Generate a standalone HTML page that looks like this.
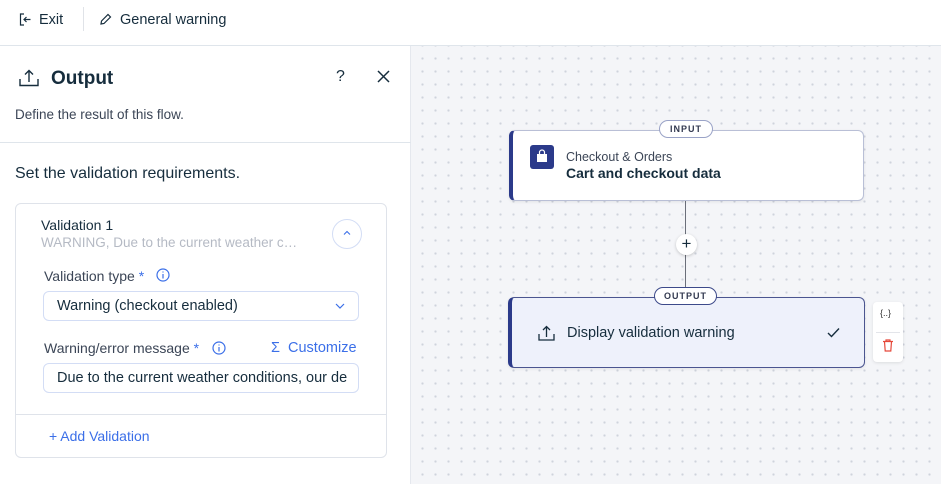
<!DOCTYPE html><html><head><style>
*{box-sizing:border-box;margin:0;padding:0}
body{width:941px;height:484px;overflow:hidden;font-family:"Liberation Sans",sans-serif;color:#162d3d;background:#fff;position:relative}
.abs{position:absolute}
.top{left:0;top:0;width:941px;height:46px;border-bottom:1px solid #dfe5eb;background:#fff}
.left{left:0;top:46px;width:411px;height:438px;background:#fff;border-right:1px solid #e5e8ee}
.canvas{left:411px;top:46px;width:530px;height:438px;background-color:#f4f5f8;background-image:radial-gradient(circle,#cfd3dc 1px,transparent 1.3px);background-size:13px 13px;background-position:5px 6px}
.t{position:absolute;white-space:nowrap}
.card{position:absolute;background:#fff;border:1px solid #b9bfd6;border-left:4px solid #2b3a8a;border-radius:6px;box-shadow:0 1px 3px rgba(0,0,0,.08)}
.badge{position:absolute;background:#fff;border:1px solid #9aa3c7;border-radius:10px;font-size:9px;letter-spacing:1px;font-weight:bold;color:#333a50;text-align:center;line-height:16px}
.field{position:absolute;border:1px solid #d3ddf5;border-radius:6px;background:#fff;font-size:14.5px;color:#162d3d;padding-left:13px;line-height:28px;overflow:hidden;white-space:nowrap}
.blue{color:#3b6fe8}
</style></head><body>
<div class="abs top">
 <svg class="abs" style="left:19px;top:13px" width="13" height="13" viewBox="0 0 13 13" fill="none" stroke="#162d3d" stroke-width="1.2"><path d="M5 1H1.5v11H5M11.5 6.5H5M7.5 4L5 6.5 7.5 9"/></svg>
 <div class="t" style="left:39px;top:12px;font-size:14.5px">Exit</div>
 <div class="abs" style="left:83px;top:7px;width:1px;height:24px;background:#e0e3e8"></div>
 <svg class="abs" style="left:99px;top:13px" width="13" height="13" viewBox="0 0 13 13" fill="none" stroke="#162d3d" stroke-width="1.2"><path d="M2 11l.5-3L9 1.5l2.5 2.5L5 10.5z"/></svg>
 <div class="t" style="left:120px;top:12px;font-size:14.5px">General warning</div>
</div>
<div class="abs left">
 <svg class="abs" style="left:19px;top:23px" width="20" height="18" viewBox="0 0 20 18" fill="none" stroke="#162d3d" stroke-width="1.4"><path d="M1 10v6.5h18V10M10 13V1.5M6 5.5l4-4 4 4"/></svg>
 <div class="t" style="left:51px;top:22px;font-size:19px;font-weight:bold">Output</div>
 <div class="t" style="left:336px;top:22px;font-size:16px">?</div>
 <svg class="abs" style="left:377px;top:24px" width="13" height="13" viewBox="0 0 13 13" stroke="#162d3d" stroke-width="1.5"><path d="M1 1l11 11M12 1L1 12"/></svg>
 <div class="t" style="left:15px;top:61px;font-size:13.5px;color:#3b4556">Define the result of this flow.</div>
 <div class="abs" style="left:0;top:96px;width:411px;height:1px;background:#dfe5eb"></div>
 <div class="t" style="left:15px;top:119px;font-size:16px;color:#162d3d">Set the validation requirements.</div>
 <div class="abs" style="left:15px;top:157px;width:372px;height:255px;border:1px solid #dfe3ea;border-radius:6px"></div>
 <div class="t" style="left:41px;top:171px;font-size:14px">Validation 1</div>
 <div class="t" style="left:41px;top:189px;font-size:13.5px;color:#b5bac4">WARNING, Due to the current weather c…</div>
 <div class="abs" style="left:332px;top:173px;width:30px;height:30px;border:1px solid #d3ddf5;border-radius:50%"></div>
 <svg class="abs" style="left:343px;top:184px" width="8" height="6" viewBox="0 0 8 6" fill="none" stroke="#3b6fe8" stroke-width="1.1"><path d="M1 4.5l3-3 3 3"/></svg>
 <div class="t" style="left:44px;top:222px;font-size:14px;color:#3b4556">Validation type <span class="blue">*</span></div>
 <svg class="abs" style="left:156px;top:222px" width="14" height="14" viewBox="0 0 14 14" fill="none" stroke="#3b6fe8" stroke-width="1.2"><circle cx="7" cy="7" r="6"/><path d="M7 6v4.5M7 3.5v1"/></svg>
 <div class="field" style="left:43px;top:245px;width:316px;height:30px">Warning (checkout enabled)</div>
 <svg class="abs" style="left:335px;top:257px" width="10" height="6" viewBox="0 0 10 6" fill="none" stroke="#3b6fe8" stroke-width="1.2"><path d="M1 1l4 4 4-4"/></svg>
 <div class="t" style="left:44px;top:294px;font-size:14px;color:#3b4556">Warning/error message <span class="blue">*</span></div>
 <svg class="abs" style="left:212px;top:295px" width="14" height="14" viewBox="0 0 14 14" fill="none" stroke="#3b6fe8" stroke-width="1.2"><circle cx="7" cy="7" r="6"/><path d="M7 6v4.5M7 3.5v1"/></svg>
 <div class="t blue" style="left:271px;top:294px;font-size:14.5px">Σ&nbsp;&nbsp;Customize</div>
 <div class="field" style="left:43px;top:317px;width:316px;height:30px">Due to the current weather conditions, our de</div>
 <div class="abs" style="left:16px;top:368px;width:370px;height:1px;background:#dfe3ea"></div>
 <div class="t blue" style="left:49px;top:382px;font-size:14px">+ Add Validation</div>
</div>
<div class="abs canvas"></div>
<div class="abs" style="left:685px;top:200px;width:1px;height:97px;background:#6b6f7a"></div>
<div class="abs" style="left:676px;top:234px;width:21px;height:21px;border-radius:50%;background:#fff;box-shadow:0 1px 3px rgba(0,0,0,.2);text-align:center;font-size:17px;line-height:20px;color:#162d3d">+</div>
<div class="card" style="left:509px;top:130px;width:355px;height:71px">
 <div class="abs" style="left:17px;top:14px;width:24px;height:24px;background:#2b3a8a;border-radius:3px"></div>
 <svg class="abs" style="left:22px;top:18px" width="14" height="15" viewBox="0 0 14 15"><path d="M2 5h10v8H2z" fill="#fff"/><path d="M4.5 5V3.5a2.5 2.5 0 015 0V5" fill="none" stroke="#fff" stroke-width="1.2"/></svg>
 <div class="t" style="left:53px;top:19px;font-size:12.5px;color:#3b4556">Checkout &amp; Orders</div>
 <div class="t" style="left:53px;top:34px;font-size:14px;font-weight:bold;color:#162d3d">Cart and checkout data</div>
</div>
<div class="badge" style="left:659px;top:120px;width:54px;height:18px">INPUT</div>
<div class="card" style="left:508px;top:297px;width:357px;height:71px;background:#eef1fb;border-color:#4b5590;border-left-color:#2b3a8a">
 <svg class="abs" style="left:26px;top:27px" width="17" height="16" viewBox="0 0 17 16" fill="none" stroke="#162d3d" stroke-width="1.3"><path d="M1 9v6h15V9M8.5 12V1.5M5 5l3.5-3.5L12 5"/></svg>
 <div class="t" style="left:55px;top:27px;font-size:14.5px;color:#162d3d">Display validation warning</div>
 <svg class="abs" style="left:315px;top:29px" width="13" height="11" viewBox="0 0 13 11" fill="none" stroke="#162d3d" stroke-width="1.4"><path d="M1 6l3.5 3.5L12 1.5"/></svg>
</div>
<div class="badge" style="left:654px;top:287px;width:63px;height:18px;border-color:#3d4a8a">OUTPUT</div>
<div class="abs" style="left:873px;top:302px;width:30px;height:60px;background:#fff;border-radius:4px;box-shadow:0 1px 3px rgba(0,0,0,.1)">
 <div class="t" style="left:7px;top:6px;font-size:9px;color:#333">{..}</div>
 <div class="abs" style="left:3px;top:30px;width:24px;height:1px;background:#e3e5ea"></div>
 <svg class="abs" style="left:9px;top:37px" width="12" height="13" viewBox="0 0 12 13" fill="none" stroke="#e5483a" stroke-width="1.2"><path d="M1 2.5h10M4 2.5V1h4v1.5M2.5 2.5l.7 9.5h5.6l.7-9.5"/></svg>
</div>
</body></html>
